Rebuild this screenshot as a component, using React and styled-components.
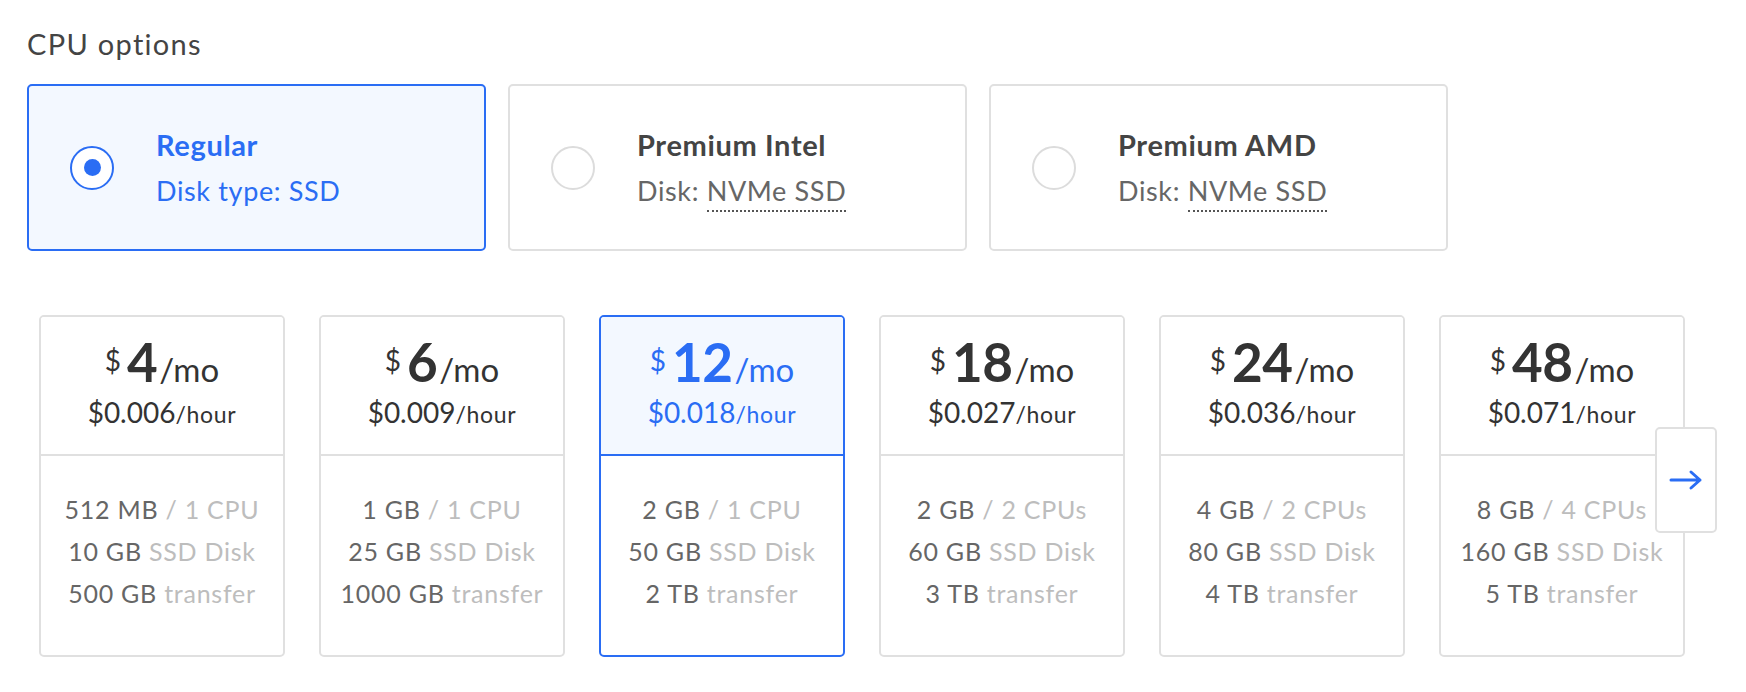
import React from "react";
import styled, { createGlobalStyle } from "styled-components";

const GlobalStyle = createGlobalStyle`
  body {
    margin: 0;
    background: #fff;
    font-family: Lato, "Open Sans", sans-serif;
    color: #444;
  }
`;

const BLUE = "#2a6df4";

const Page = styled.div`
  padding: 24px 0 0 27px;
`;

const Title = styled.h2`
  margin: 0 0 20px;
  font-size: 29px;
  font-weight: 400;
  line-height: 40px;
  letter-spacing: 0.045em;
  color: #444;
`;

const OptionRow = styled.div`
  display: flex;
  gap: 22px;
`;

const OptionCard = styled.div`
  box-sizing: border-box;
  width: 459px;
  height: 167px;
  display: flex;
  align-items: center;
  padding-left: 41px;
  gap: 42px;
  border: 2px solid ${(p) => (p.selected ? BLUE : "#e0e0e0")};
  border-radius: 5px;
  background: ${(p) => (p.selected ? "#f3f8ff" : "#fff")};
`;

const Radio = styled.span`
  box-sizing: border-box;
  width: 44px;
  height: 44px;
  border-radius: 50%;
  border: 2px solid ${(p) => (p.selected ? BLUE : "#dcdcdc")};
  background: #fff;
  display: flex;
  align-items: center;
  justify-content: center;
  &::after {
    content: "";
    display: ${(p) => (p.selected ? "block" : "none")};
    width: 17px;
    height: 17px;
    border-radius: 50%;
    background: ${BLUE};
  }
`;

const OptionText = styled.div`
  display: flex;
  flex-direction: column;
  gap: 10px;
  letter-spacing: 0.04em;
  color: ${(p) => (p.selected ? BLUE : "#444")};
`;

const OptionName = styled.div`
  font-size: 29px;
  font-weight: 700;
  line-height: 36px;
`;

const OptionSub = styled.div`
  font-size: 27px;
  line-height: 36px;
  color: ${(p) => (p.selected ? BLUE : "#666")};
`;

const Dotted = styled.span`
  border-bottom: 2px dotted #555;
  padding-bottom: 3px;
`;

const PlanRow = styled.div`
  position: relative;
  display: flex;
  gap: 34px;
  margin: 64px 0 0 12px;
  width: max-content;
`;

const PlanCard = styled.div`
  box-sizing: border-box;
  width: 246px;
  height: 342px;
  border: 2px solid ${(p) => (p.selected ? BLUE : "#e0e0e0")};
  border-radius: 5px;
  display: flex;
  flex-direction: column;
  overflow: hidden;
`;

const PlanHead = styled.div`
  height: 139px;
  flex-shrink: 0;
  display: flex;
  flex-direction: column;
  align-items: center;
  justify-content: center;
  padding-bottom: 2px;
  box-sizing: border-box;
  border-bottom: 2px solid ${(p) => (p.selected ? BLUE : "#e0e0e0")};
  background: ${(p) => (p.selected ? "#f3f8ff" : "#fff")};
  color: ${(p) => (p.selected ? BLUE : "#333")};
`;

const Monthly = styled.div`
  display: flex;
  align-items: baseline;
  line-height: 50px;
`;

const Dollar = styled.span`
  font-size: 28px;
  line-height: 30px;
  align-self: flex-start;
  margin-top: 8px;
  margin-right: 6px;
`;

const Amount = styled.span`
  font-size: 53px;
  font-weight: 700;
  letter-spacing: -0.5px;
`;

const Per = styled.span`
  font-size: 33px;
  margin-left: 2px;
`;

const Hourly = styled.div`
  font-size: 28px;
  line-height: 36px;
  & small {
    font-size: 23px;
    letter-spacing: 0.03em;
  }
`;

const PlanBody = styled.div`
  flex: 1;
  display: flex;
  flex-direction: column;
  align-items: center;
  justify-content: center;
  padding-bottom: 10px;
  font-size: 25px;
  line-height: 42px;
  letter-spacing: 0.03em;
  color: #666;
  white-space: nowrap;
`;

const Muted = styled.span`
  color: #bdbdbd;
`;

const NextButton = styled.button`
  position: absolute;
  right: -32px;
  top: 112px;
  width: 62px;
  height: 106px;
  box-sizing: border-box;
  border: 2px solid #e0e0e0;
  border-radius: 5px;
  background: #fff;
  display: flex;
  align-items: center;
  justify-content: center;
  padding: 0;
  cursor: pointer;
`;

const options = [
  { name: "Regular", label: "Disk type: ", disk: "SSD", selected: true },
  { name: "Premium Intel", label: "Disk: ", disk: "NVMe SSD", dotted: true },
  { name: "Premium AMD", label: "Disk: ", disk: "NVMe SSD", dotted: true },
];

const plans = [
  { price: 4, hour: "0.006", mem: "512 MB", cpu: "1 CPU", disk: "10 GB", transfer: "500 GB" },
  { price: 6, hour: "0.009", mem: "1 GB", cpu: "1 CPU", disk: "25 GB", transfer: "1000 GB" },
  { price: 12, hour: "0.018", mem: "2 GB", cpu: "1 CPU", disk: "50 GB", transfer: "2 TB", selected: true },
  { price: 18, hour: "0.027", mem: "2 GB", cpu: "2 CPUs", disk: "60 GB", transfer: "3 TB" },
  { price: 24, hour: "0.036", mem: "4 GB", cpu: "2 CPUs", disk: "80 GB", transfer: "4 TB" },
  { price: 48, hour: "0.071", mem: "8 GB", cpu: "4 CPUs", disk: "160 GB", transfer: "5 TB" },
];

export default function App() {
  return (
    <Page>
      <GlobalStyle />
      <Title>CPU options</Title>
      <OptionRow>
        {options.map((o) => (
          <OptionCard key={o.name} selected={o.selected}>
            <Radio selected={o.selected} />
            <OptionText selected={o.selected}>
              <OptionName>{o.name}</OptionName>
              <OptionSub selected={o.selected}>
                {o.label}
                {o.dotted ? <Dotted>{o.disk}</Dotted> : o.disk}
              </OptionSub>
            </OptionText>
          </OptionCard>
        ))}
      </OptionRow>
      <PlanRow>
        {plans.map((p) => (
          <PlanCard key={p.price} selected={p.selected}>
            <PlanHead selected={p.selected}>
              <Monthly>
                <Dollar>$</Dollar>
                <Amount>{p.price}</Amount>
                <Per>/mo</Per>
              </Monthly>
              <Hourly>
                ${p.hour}
                <small>/hour</small>
              </Hourly>
            </PlanHead>
            <PlanBody>
              <div>
                {p.mem} <Muted>/ {p.cpu}</Muted>
              </div>
              <div>
                {p.disk} <Muted>SSD Disk</Muted>
              </div>
              <div>
                {p.transfer} <Muted>transfer</Muted>
              </div>
            </PlanBody>
          </PlanCard>
        ))}
        <NextButton aria-label="Next">
          <svg width="34" height="24" viewBox="0 0 34 24" fill="none">
            <path
              d="M2 12h29M22 4l9 8-9 8"
              stroke={BLUE}
              strokeWidth="3"
              strokeLinecap="round"
              strokeLinejoin="round"
            />
          </svg>
        </NextButton>
      </PlanRow>
    </Page>
  );
}
